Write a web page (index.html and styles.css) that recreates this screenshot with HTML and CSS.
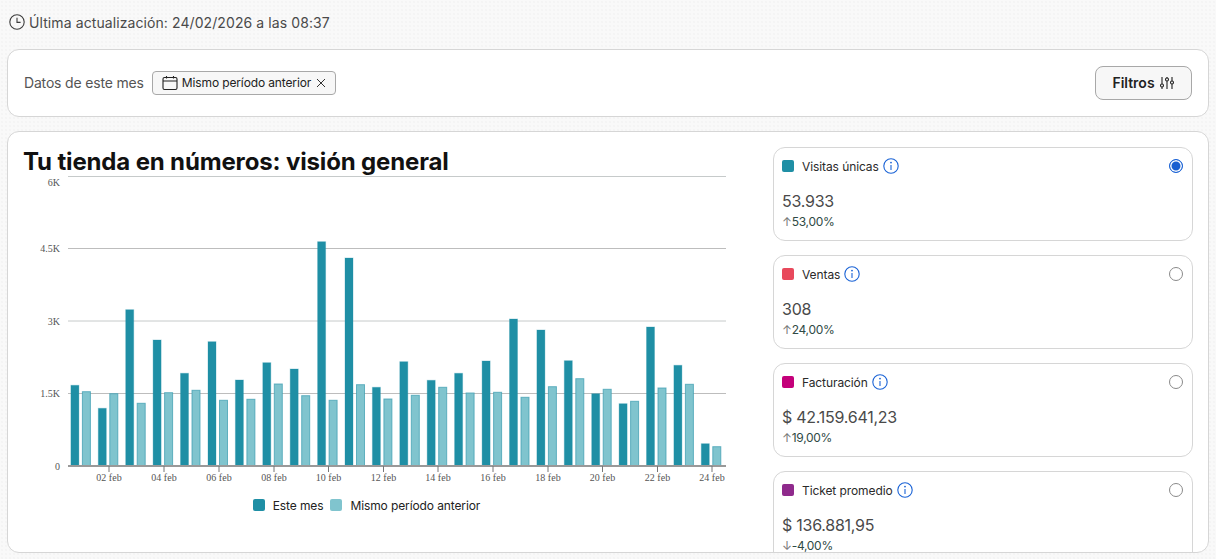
FILE: index.html
```html
<!DOCTYPE html>
<html lang="es">
<head>
<meta charset="utf-8">
<title>Tu tienda en números</title>
<link rel="stylesheet" href="styles.css">
</head>
<body>
<div class="page">
  <div class="updated">
    <svg class="ic-clock" viewBox="0 0 16 16"><circle cx="8" cy="8" r="7.2"/><path d="M8 3.8V8.4H11.6"/></svg>
    <span>Última actualización: 24/02/2026 a las 08:37</span>
  </div>

  <section class="filters">
    <span class="filters-label">Datos de este mes</span>
    <span class="chip">
      <svg class="ic-cal" viewBox="0 0 16 16"><rect x="1" y="2.500" width="14" height="12" rx="1.500"/><path d="M1 6H15M4.500 1V3.500M11.500 1V3.500"/></svg>
      <span>Mismo período anterior</span>
      <svg class="ic-x" viewBox="0 0 10 10"><path d="M1 1L9 9M9 1L1 9"/></svg>
    </span>
    <button class="filter-btn">Filtros
      <svg class="ic-sliders" viewBox="0 0 16 16"><path d="M3 2V9M3 12V14M8 2V3M8 6V14M13 2V6M13 9V14"/><circle cx="3" cy="10.500" r="1.500"/><circle cx="8" cy="4.500" r="1.500"/><circle cx="13" cy="7.500" r="1.500"/></svg>
    </button>
  </section>

  <section class="panel">
    <div class="chart-col">
      <h1 class="title">Tu tienda en números: visión general</h1>
      <svg class="chart" viewBox="24 172 709 318" width="709" height="318">
        <g class="grid">
          <line x1="68" x2="726" y1="176.500" y2="176.500" class="pale"/>
          <line x1="68" x2="726" y1="248.500" y2="248.500"/>
          <line x1="68" x2="726" y1="321" y2="321" class="pale"/>
          <line x1="68" x2="726" y1="393.500" y2="393.500"/>
        </g>
        <g class="ylabels">
          <text x="60" y="186">6K</text>
          <text x="60" y="252">4.5K</text>
          <text x="60" y="325">3K</text>
          <text x="60" y="397">1.5K</text>
          <text x="60" y="470">0</text>
        </g>
        <g class="dark">
          <rect x="70.9" y="385.3" width="8" height="80.2"/>
          <rect x="98.3" y="408.3" width="8" height="57.2"/>
          <rect x="125.7" y="309.7" width="8" height="155.8"/>
          <rect x="153.1" y="340" width="8" height="125.5"/>
          <rect x="180.5" y="373.3" width="8" height="92.2"/>
          <rect x="208" y="341.7" width="8" height="123.8"/>
          <rect x="235.4" y="380" width="8" height="85.5"/>
          <rect x="262.8" y="362.7" width="8" height="102.8"/>
          <rect x="290.2" y="369" width="8" height="96.5"/>
          <rect x="317.6" y="241.7" width="8" height="223.8"/>
          <rect x="345" y="258" width="8" height="207.5"/>
          <rect x="372.4" y="387.3" width="8" height="78.2"/>
          <rect x="399.8" y="361.7" width="8" height="103.8"/>
          <rect x="427.2" y="380.3" width="8" height="85.2"/>
          <rect x="454.6" y="373.3" width="8" height="92.2"/>
          <rect x="482.1" y="361" width="8" height="104.5"/>
          <rect x="509.5" y="319" width="8" height="146.5"/>
          <rect x="536.9" y="330" width="8" height="135.5"/>
          <rect x="564.3" y="360.7" width="8" height="104.8"/>
          <rect x="591.7" y="393.7" width="8" height="71.8"/>
          <rect x="619.1" y="403.7" width="8" height="61.8"/>
          <rect x="646.5" y="327" width="8" height="138.5"/>
          <rect x="673.9" y="365.3" width="8" height="100.2"/>
          <rect x="701.3" y="443.7" width="8" height="21.8"/>
        </g>
        <g class="light">
          <rect x="82.4" y="391.7" width="8" height="73.8"/>
          <rect x="109.8" y="393.7" width="8" height="71.8"/>
          <rect x="137.2" y="403.3" width="8" height="62.2"/>
          <rect x="164.6" y="392.7" width="8" height="72.8"/>
          <rect x="192" y="390.3" width="8" height="75.2"/>
          <rect x="219.5" y="400.3" width="8" height="65.2"/>
          <rect x="246.9" y="399.3" width="8" height="66.2"/>
          <rect x="274.3" y="384" width="8" height="81.5"/>
          <rect x="301.7" y="395.7" width="8" height="69.8"/>
          <rect x="329.1" y="400.3" width="8" height="65.2"/>
          <rect x="356.5" y="384.7" width="8" height="80.8"/>
          <rect x="383.9" y="399" width="8" height="66.5"/>
          <rect x="411.3" y="395.3" width="8" height="70.2"/>
          <rect x="438.7" y="387.3" width="8" height="78.2"/>
          <rect x="466.1" y="393" width="8" height="72.5"/>
          <rect x="493.6" y="392.3" width="8" height="73.2"/>
          <rect x="521" y="397.3" width="8" height="68.2"/>
          <rect x="548.4" y="386.7" width="8" height="78.8"/>
          <rect x="575.8" y="378.7" width="8" height="86.8"/>
          <rect x="603.2" y="389.3" width="8" height="76.2"/>
          <rect x="630.6" y="401.3" width="8" height="64.2"/>
          <rect x="658" y="388" width="8" height="77.5"/>
          <rect x="685.4" y="384.3" width="8" height="81.2"/>
          <rect x="712.8" y="446.7" width="8" height="18.8"/>
        </g>
        <line class="axis" x1="68" x2="726" y1="466" y2="466"/>
        <path class="ticks" d="M109 466V472M164 466V472M219 466V472M274 466V472M328.500 466V472M383.500 466V472M438 466V472M493 466V472M548 466V472M602.500 466V472M657.500 466V472M712 466V472"/>
        <g class="xlabels">
          <text x="109" y="481">02 feb</text>
          <text x="164" y="481">04 feb</text>
          <text x="219" y="481">06 feb</text>
          <text x="274" y="481">08 feb</text>
          <text x="328.500" y="481">10 feb</text>
          <text x="383.500" y="481">12 feb</text>
          <text x="438" y="481">14 feb</text>
          <text x="493" y="481">16 feb</text>
          <text x="548" y="481">18 feb</text>
          <text x="602.500" y="481">20 feb</text>
          <text x="657.500" y="481">22 feb</text>
          <text x="712" y="481">24 feb</text>
        </g>
      </svg>
      <div class="legend">
        <span class="legend-item"><i class="swatch teal"></i>Este mes</span>
        <span class="legend-item"><i class="swatch teal-light"></i>Mismo período anterior</span>
      </div>
    </div>

    <div class="metrics">
      <article class="metric">
        <div class="metric-head">
          <i class="swatch teal"></i><span class="metric-name">Visitas únicas</span>
          <svg class="ic-info" viewBox="0 0 16 16"><circle cx="8" cy="8" r="7.200"/><path d="M8 7V12"/><circle class="dot" cx="8" cy="4.600" r="0.900"/></svg>
          <span class="radio on"></span>
        </div>
        <div class="metric-value">53.933</div>
        <div class="metric-delta"><span class="arrow">↑</span>53,00%</div>
      </article>
      <article class="metric">
        <div class="metric-head">
          <i class="swatch red"></i><span class="metric-name">Ventas</span>
          <svg class="ic-info" viewBox="0 0 16 16"><circle cx="8" cy="8" r="7.200"/><path d="M8 7V12"/><circle class="dot" cx="8" cy="4.600" r="0.900"/></svg>
          <span class="radio"></span>
        </div>
        <div class="metric-value">308</div>
        <div class="metric-delta"><span class="arrow">↑</span>24,00%</div>
      </article>
      <article class="metric">
        <div class="metric-head">
          <i class="swatch magenta"></i><span class="metric-name">Facturación</span>
          <svg class="ic-info" viewBox="0 0 16 16"><circle cx="8" cy="8" r="7.200"/><path d="M8 7V12"/><circle class="dot" cx="8" cy="4.600" r="0.900"/></svg>
          <span class="radio"></span>
        </div>
        <div class="metric-value">$ 42.159.641,23</div>
        <div class="metric-delta"><span class="arrow">↑</span>19,00%</div>
      </article>
      <article class="metric">
        <div class="metric-head">
          <i class="swatch purple"></i><span class="metric-name">Ticket promedio</span>
          <svg class="ic-info" viewBox="0 0 16 16"><circle cx="8" cy="8" r="7.200"/><path d="M8 7V12"/><circle class="dot" cx="8" cy="4.600" r="0.900"/></svg>
          <span class="radio"></span>
        </div>
        <div class="metric-value">$ 136.881,95</div>
        <div class="metric-delta"><span class="arrow">↓</span>-4,00%</div>
      </article>
    </div>
  </section>
</div>
</body>
</html>
```
FILE: styles.css
```css
* { box-sizing: border-box; }
html, body { margin: 0; height: 100%; }
body {
  font-family: Inter, "Liberation Sans", sans-serif;
  color: #1f1f1f;
  background-color: #f9f9f9;
  background-image: radial-gradient(#f4f4f4 0.7px, transparent 0.8px);
  background-size: 4px 4px;
  overflow: hidden;
}
.page {
  height: 559px;
  display: flex;
  flex-direction: column;
  padding: 0 7px 6px;
  overflow: hidden;
}
.updated {
  height: 49px;
  padding: 0 0 5px 2px;
  display: flex;
  align-items: center;
  gap: 4px;
  font-size: 14px;
  letter-spacing: 0.09px;
  color: #4a4a4a;
}
.ic-clock { width: 16px; height: 16px; flex: none; fill: none; stroke: #3c3c3c; stroke-width: 1.1; }

.filters {
  height: 68px;
  flex: none;
  margin-bottom: 14px;
  padding: 0 16px 1px;
  display: flex;
  align-items: center;
  background: #fff;
  border: 1px solid #d6d6d6;
  border-radius: 12px;
}
.filters-label { font-size: 14px; letter-spacing: -0.17px; color: #555; margin-right: 8px; }
.chip {
  height: 24px;
  display: inline-flex;
  align-items: center;
  gap: 4px;
  padding: 0 9px;
  font-size: 12px;
  letter-spacing: -0.13px;
  color: #222;
  background: #f7f7f7;
  border: 1px solid #a8a8a8;
  border-radius: 4px;
}
.ic-cal { width: 16px; height: 16px; fill: none; stroke: #222; stroke-width: 1.1; }
.ic-x { width: 10px; height: 10px; margin-left: 1px; fill: none; stroke: #333; stroke-width: 1; }
.filter-btn {
  margin-left: auto;
  width: 97px;
  height: 34px;
  display: inline-flex;
  align-items: center;
  justify-content: center;
  gap: 4px;
  font: 600 14px Inter, "Liberation Sans", sans-serif;
  color: #222;
  background: #f7f7f7;
  border: 1px solid #a8a8a8;
  border-radius: 8px;
}
.ic-sliders { width: 16px; height: 16px; fill: none; stroke: #222; stroke-width: 1.1; }

.panel {
  flex: 1;
  min-height: 0;
  display: flex;
  padding: 15px 15px 0 16px;
  background: #fff;
  border: 1px solid #d6d6d6;
  border-radius: 12px;
  overflow: hidden;
}
.chart-col { flex: 1; min-width: 0; }
.title {
  margin: 0 0 0 -1px;
  height: 25px;
  font-size: 24px;
  line-height: 29px;
  font-weight: 700;
  letter-spacing: -0.15px;
  color: #111;
  white-space: nowrap;
}
.chart { display: block; }
.grid line { stroke: #bdbdbd; stroke-width: 1; }
.grid line.pale { stroke: #c6caca; }
.ylabels text, .xlabels text {
  font: 10px "Liberation Serif", serif;
  fill: #555;
}
.ylabels text { text-anchor: end; }
.xlabels text { text-anchor: middle; }
.dark rect { fill: #1f8fa5; stroke: #1f8fa5; stroke-opacity: .3; }
.light rect { fill: #80c4ce; stroke: #3f9fb2; stroke-opacity: .75; }
.axis { stroke: #999; stroke-width: 2; }
.ticks { stroke: #777; stroke-width: 1; fill: none; }

.legend {
  width: 685px;
  height: 30px;
  display: flex;
  align-items: center;
  justify-content: center;
  gap: 7px;
  font-size: 12px;
  letter-spacing: -0.11px;
  color: #222;
}
.legend-item { display: inline-flex; align-items: center; gap: 8px; }
.swatch { display: block; flex: none; width: 12px; height: 12px; border-radius: 2px; }
.teal { background: #1f8fa5; }
.teal-light { background: #80c4ce; }
.red { background: #e8495c; }
.magenta { background: #c4007a; }
.purple { background: #8f2a8c; }

.metrics {
  flex: none;
  width: 420px;
  display: flex;
  flex-direction: column;
  gap: 14px;
  overflow: hidden;
}
.metric {
  flex: none;
  height: 94px;
  padding: 10px 9px 0 8px;
  border: 1px solid #d6d6d6;
  border-radius: 12px;
  background: #fff;
}
.metric-head { height: 16px; display: flex; align-items: center; }
.metric-name { margin-left: 8px; font-size: 12px; letter-spacing: -0.09px; color: #2a2a2a; }
.ic-info { width: 16px; height: 16px; margin-left: 4px; fill: none; stroke: #1a63d6; stroke-width: 1.1; }
.ic-info .dot { fill: #1a63d6; stroke: none; }
.radio {
  margin-left: auto;
  width: 14px;
  height: 14px;
  border: 1px solid #8a8a8a;
  border-radius: 50%;
  background: #fff;
}
.radio.on {
  border-color: #1a63d6;
  background: #1a5fd0;
  box-shadow: inset 0 0 0 1.5px #fff;
}
.metric-value { margin-top: 15px; font-size: 16px; line-height: 25px; letter-spacing: -0.25px; color: #4a4a4a; }
.metric-delta { font-size: 12px; line-height: 16px; letter-spacing: -0.3px; color: #2f4a45; }
.arrow { color: #777; }
```
